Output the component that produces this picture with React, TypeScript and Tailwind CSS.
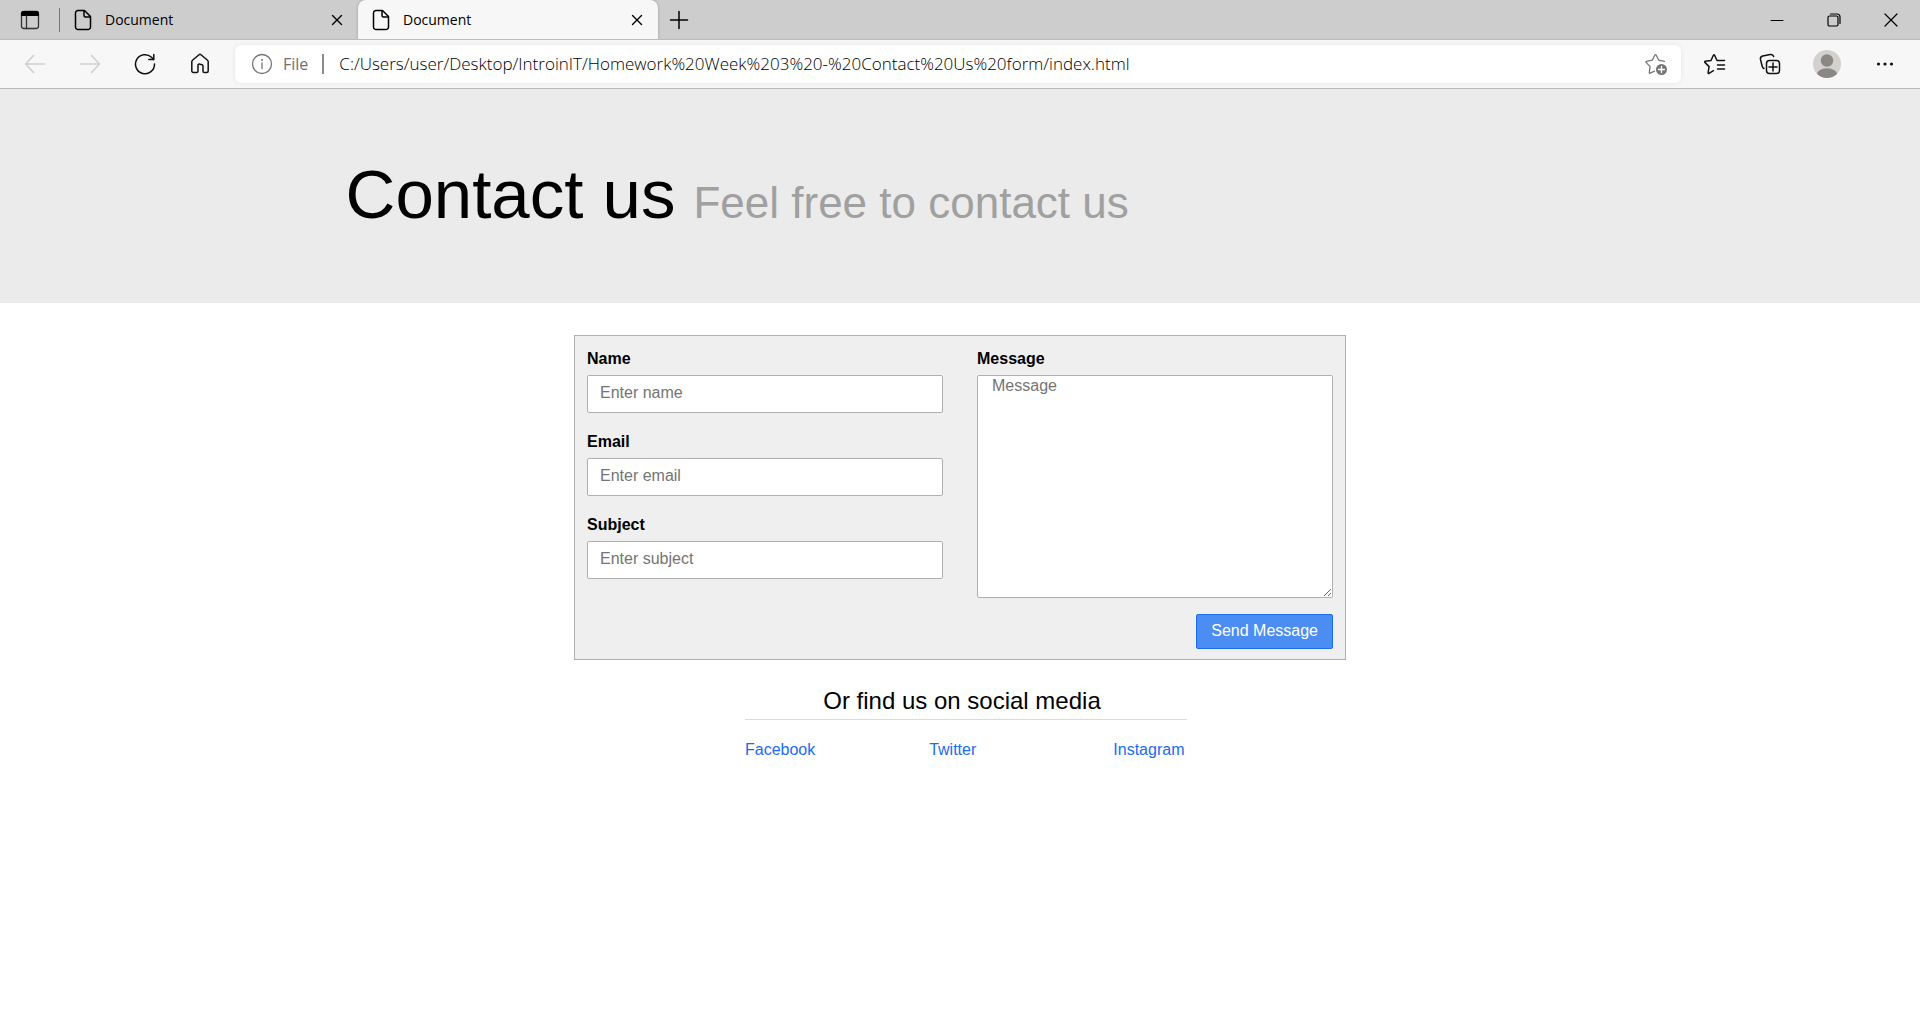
import React from "react";

function Icon({ children, size = 24, className = "" }: { children: React.ReactNode; size?: number; className?: string }) {
  return (
    <svg
      width={size}
      height={size}
      viewBox={`0 0 ${size} ${size}`}
      fill="none"
      stroke="currentColor"
      strokeWidth="1.5"
      strokeLinecap="round"
      strokeLinejoin="round"
      className={`shrink-0 ${className}`}
      aria-hidden="true"
    >
      {children}
    </svg>
  );
}

function PageIcon() {
  return (
    <Icon>
      <path d="M7 2.500h6.500l6 6V19a2.500 2.500 0 0 1-2.500 2.500H7A2.500 2.500 0 0 1 4.500 19V5A2.500 2.500 0 0 1 7 2.500Z" />
      <path d="M13 3v4.500A1.500 1.500 0 0 0 14.500 9H19" />
    </Icon>
  );
}

function CloseIcon() {
  return (
    <Icon size={16} className="text-black">
      <path d="M3.500 3.500l9 9M12.500 3.500l-9 9" strokeWidth="1.4" />
    </Icon>
  );
}

function Tab({ title, active = false }: { title: string; active?: boolean }) {
  return (
    <div
      className={
        active
          ? "flex h-10 w-[300px] items-center rounded-t-lg bg-[#f7f7f7] px-[11px] shadow-[0_0_3px_rgba(0,0,0,0.25)]"
          : "flex h-10 w-[298px] items-center px-[11px]"
      }
    >
      <PageIcon />
      <span className="ml-2.5 flex-1 text-sm text-black">{title}</span>
      <button type="button" aria-label="Close tab" className="flex size-5 items-center justify-center">
        <CloseIcon />
      </button>
    </div>
  );
}

function TitleBar() {
  return (
    <div className="flex h-10 items-center overflow-hidden border-b border-[#bcbcbc] bg-[#cdcdcd]">
      <button type="button" aria-label="Tab actions" className="flex h-10 w-[59px] items-center justify-center">
        <Icon>
          <rect x="3.500" y="3.500" width="17" height="17" rx="2.500" stroke="#333" strokeWidth="1.300" />
          <path d="M3 8V5.500A2.500 2.500 0 0 1 5.500 3h13A2.500 2.500 0 0 1 21 5.500V8Z" fill="currentColor" stroke="none" />
          <path d="M8.500 8v12.500" stroke="#333" strokeWidth="1.300" />
        </Icon>
      </button>
      <span className="h-6 w-px bg-[#777]" />
      <Tab title="Document" />
      <Tab title="Document" active />
      <button type="button" aria-label="New tab" className="flex h-10 w-[42px] items-center justify-center">
        <Icon>
          <path d="M12 3.500v17M3.500 12h17" />
        </Icon>
      </button>
      <div className="ml-auto flex">
        <button type="button" aria-label="Minimize" className="flex h-10 w-[57px] items-center justify-center">
          <Icon size={16}>
            <path d="M2 8.500h12" strokeWidth="1" />
          </Icon>
        </button>
        <button type="button" aria-label="Restore" className="flex h-10 w-[57px] items-center justify-center">
          <Icon size={16}>
            <rect x="2" y="4" width="10" height="10" rx="1.500" strokeWidth="1.200" />
            <path d="M4.500 2H11a3 3 0 0 1 3 3v6.500" strokeWidth="1.200" />
          </Icon>
        </button>
        <button type="button" aria-label="Close window" className="flex h-10 w-[58px] items-center justify-center">
          <Icon size={16}>
            <path d="M2 2l12 12M14 2L2 14" strokeWidth="1.200" />
          </Icon>
        </button>
      </div>
    </div>
  );
}

function ToolButton({ label, children, className = "" }: { label: string; children: React.ReactNode; className?: string }) {
  return (
    <button type="button" aria-label={label} className={`flex h-10 w-[55px] shrink-0 items-center justify-center ${className}`}>
      {children}
    </button>
  );
}

function ToolBar() {
  return (
    <div className="flex h-[49px] items-center border-b border-[#b9b9b9] bg-[#f7f7f7] pr-2 pl-[7px] text-[#111]">
      <ToolButton label="Back" className="text-[#cfcfcf]">
        <Icon>
          <path d="M21.500 12h-19M10.500 3.500L2.500 12l8 8.500" />
        </Icon>
      </ToolButton>
      <ToolButton label="Forward" className="text-[#cfcfcf]">
        <Icon>
          <path d="M2.500 12h19M13.500 3.500l8 8.500-8 8.500" />
        </Icon>
      </ToolButton>
      <ToolButton label="Refresh">
        <Icon>
          <path d="M21.500 12A9.500 9.500 0 1 1 18.500 5.300L20.500 7.500" />
          <path d="M20.800 2.500v5h-5" />
        </Icon>
      </ToolButton>
      <ToolButton label="Home">
        <Icon>
          <path d="M3.800 9.800a2 2 0 0 1 .7-1.500L11 2.800a1.500 1.500 0 0 1 2 0l6.500 5.500a2 2 0 0 1 .7 1.500V19a1.500 1.500 0 0 1-1.500 1.500h-2.400a1.300 1.300 0 0 1-1.300-1.300V14a1.500 1.500 0 0 0-1.500-1.500h-1A1.500 1.500 0 0 0 10 14v5.200a1.300 1.300 0 0 1-1.300 1.300H5.300A1.500 1.500 0 0 1 3.800 19Z" />
        </Icon>
      </ToolButton>
      <div className="ml-2 flex h-[38px] min-w-0 flex-1 items-center rounded-md bg-white pr-[13px] pl-[15px] text-base shadow-[0_0_5px_rgba(0,0,0,0.08)]">
        <Icon className="text-[#767676]">
          <circle cx="12" cy="12" r="9.500" strokeWidth="1.300" />
          <path d="M12 11v5.500" strokeWidth="1.300" />
          <circle cx="12" cy="8" r="1" fill="currentColor" stroke="none" />
        </Icon>
        <span className="ml-[9px] text-[#707070]">File</span>
        <span className="mr-[15px] ml-3.5 h-5 w-0.5 bg-[#8a8a8a]" />
        <input
          aria-label="Address"
          readOnly
          className="min-w-0 flex-1 text-[17px] font-light text-black outline-none"
          defaultValue="C:/Users/user/Desktop/IntroinIT/Homework%20Week%203%20-%20Contact%20Us%20form/index.html"
        />
        <button type="button" aria-label="Add to favorites" className="text-[#767676]">
          <Icon>
            <path
              d="M10.500 19.200l-4.300 2c-.5.300-1-.1-.9-.7l.8-5.900-4-4.200c-.4-.4-.2-1 .3-1.100l5.800-1.100 2.700-5.200c.3-.5.900-.5 1.200 0l2.700 5.200 5.600 1.100"
              strokeWidth="1.300"
            />
            <circle cx="17.500" cy="17.500" r="5.500" fill="currentColor" stroke="none" />
            <path d="M17.500 14.500v6M14.500 17.500h6" stroke="white" strokeWidth="1.300" />
          </Icon>
        </button>
      </div>
      <div className="ml-1.5 flex">
        <ToolButton label="Favorites">
          <Icon>
            <path d="M10.500 18.700l-4.500 2.600c-.5.300-1-.1-.9-.7l1-6-4.200-4.200c-.4-.4-.2-1 .3-1.100l5.800-.8 2.500-5.500c.2-.5.800-.5 1 0l2.500 5.500h7.500M14.500 13h7M14.500 17h7" />
          </Icon>
        </ToolButton>
        <ToolButton label="Collections">
          <Icon>
            <path d="M6 16.500A3 3 0 0 1 4.200 14.300L2.500 7.500A3 3 0 0 1 4.700 4l7.500-1.500A3 3 0 0 1 15.700 4.500" />
            <rect x="8.500" y="8.500" width="13" height="13" rx="3" />
            <path d="M15 11v8M11 15h8" />
          </Icon>
        </ToolButton>
        <button type="button" aria-label="Profile" className="flex h-10 w-[60px] items-center justify-center">
          <svg width="28" height="28" viewBox="0 0 28 28" aria-hidden="true">
            <clipPath id="avatar">
              <circle cx="14" cy="14" r="14" />
            </clipPath>
            <g clipPath="url(#avatar)">
              <rect width="28" height="28" fill="#d3d1ce" />
              <circle cx="14" cy="10.500" r="6.200" fill="#8b8783" />
              <ellipse cx="14" cy="25" rx="10.500" ry="6.800" fill="#8b8783" />
            </g>
          </svg>
        </button>
        <ToolButton label="Settings and more">
          <Icon>
            <g fill="currentColor" stroke="none">
              <circle cx="5.500" cy="12" r="1.600" />
              <circle cx="12" cy="12" r="1.600" />
              <circle cx="18.500" cy="12" r="1.600" />
            </g>
          </Icon>
        </ToolButton>
      </div>
    </div>
  );
}

function Field({ id, label, placeholder, type = "text" }: { id: string; label: string; placeholder: string; type?: string }) {
  return (
    <div className="flex flex-col">
      <label htmlFor={id} className="mb-1 font-bold">
        {label}
      </label>
      <input
        id={id}
        type={type}
        placeholder={placeholder}
        className="h-[38px] rounded-xs border border-[#b0b0b0] bg-white px-3 pb-0.5 placeholder:text-[#757575]"
      />
    </div>
  );
}

export default function App() {
  return (
    <div className="min-h-screen bg-white font-['Liberation_Sans',Arial,sans-serif] text-base text-black">
      <div className="font-['Open_Sans',sans-serif]">
        <TitleBar />
        <ToolBar />
      </div>

      <header className="bg-[#ebebeb] pt-[66px] pb-[68px] pl-[18%]">
        <h1 className="flex items-baseline gap-[18px] text-[69px] leading-[80px]">
          Contact us
          <small className="text-[44px] leading-none text-[#a0a0a0]">Feel free to contact us</small>
        </h1>
      </header>

      <main>
        <form
          onSubmit={(e) => e.preventDefault()}
          className="mx-auto mt-8 grid w-full max-w-[772px] grid-cols-2 gap-x-[34px] border border-[#b0b0b0] bg-[#efefef] px-3 pt-[11px] pb-2.5"
        >
          <div className="flex flex-col gap-[17px]">
            <Field id="name" label="Name" placeholder="Enter name" />
            <Field id="email" label="Email" placeholder="Enter email" type="email" />
            <Field id="subject" label="Subject" placeholder="Enter subject" />
          </div>
          <div className="flex flex-col">
            <label htmlFor="message" className="mb-1 font-bold">
              Message
            </label>
            <textarea
              id="message"
              placeholder="Message"
              className="h-[223px] resize rounded-xs border border-[#b0b0b0] bg-white px-3.5 leading-5 placeholder:text-[#757575]"
            />
            <button
              type="submit"
              className="mt-4 h-[35px] self-end rounded-xs border border-[#1a6df0] bg-[#4b8df3] px-3.5 pb-0.5 text-white"
            >
              Send Message
            </button>
          </div>
        </form>

        <section className="mx-auto mt-[25px] w-full max-w-[454px] pl-3">
          <h2 className="border-b border-[#dcdcdc] pr-2 pb-0.5 text-center text-2xl">Or find us on social media</h2>
          <nav className="mt-[18px] grid grid-cols-[5fr_5fr_2fr] text-[#1a6df0]">
            <a href="#facebook">Facebook</a>
            <a href="#twitter">Twitter</a>
            <a href="#instagram">Instagram</a>
          </nav>
        </section>
      </main>
    </div>
  );
}
